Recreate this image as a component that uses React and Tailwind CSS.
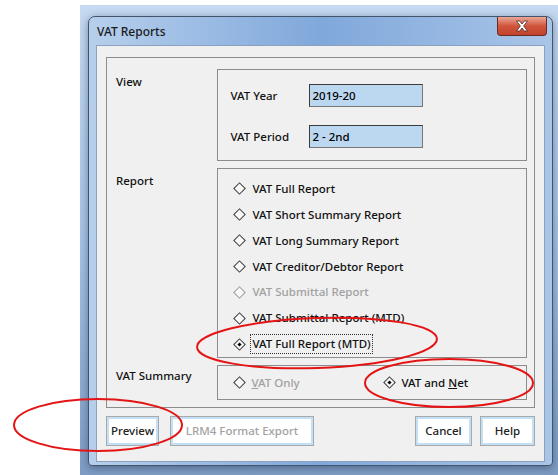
import React from 'react';

const font = { fontFamily: '"Noto Sans", "Open Sans", sans-serif' };

const Diamond = ({ checked, disabled }) => (
  <span className="flex h-[13px] w-[13px] shrink-0 items-center justify-center">
    <span
      className={`flex h-[9px] w-[9px] rotate-45 items-center justify-center border bg-[#f8f8f8] ${
        disabled ? 'border-[#9a9a9a]' : 'border-[#3a3a3a]'
      }`}
    >
      {checked && <span className="h-[3px] w-[3px] bg-black" />}
    </span>
  </span>
);

const reports = [
  { label: 'VAT Full Report' },
  { label: 'VAT Short Summary Report' },
  { label: 'VAT Long Summary Report' },
  { label: 'VAT Creditor/Debtor Report' },
  { label: 'VAT Submittal Report', disabled: true },
  { label: 'VAT Submittal Report (MTD)' },
  { label: 'VAT Full Report (MTD)', checked: true },
];

const Field = ({ label, value }) => (
  <div className="flex items-center">
    <span className="w-[79px] text-[11.5px] font-medium text-[#111]">{label}</span>
    <div className="flex h-[23px] w-[114px] items-center border border-[#3c3c3c] border-r-[#777] border-b-[#777] bg-[#bcd7f0] px-[2px] text-[11.5px] font-medium text-black">
      {value}
    </div>
  </div>
);

const Button = ({ children, disabled, className = '' }) => (
  <button
    className={`flex h-[30px] items-center justify-center border border-[#a9a9a9] bg-white text-[11.5px] font-medium shadow-[inset_0_0_0_2px_#c2e1f7] ${
      disabled ? 'text-[#a2a2a2]' : 'text-[#222]'
    } ${className}`}
  >
    {children}
  </button>
);

const Section = ({ label, labelPad, children }) => (
  <div className="flex">
    <div className={`w-[102px] text-[11.5px] font-medium text-[#111] ${labelPad}`}>{label}</div>
    {children}
  </div>
);

export default function App() {
  return (
    <div className="relative h-[475px] w-[558px] overflow-hidden bg-white" style={font}>
      <div className="flex h-full pl-[80px] pt-[5px]">
        {/* desktop behind the dialog */}
        <div className="flex-1 bg-gradient-to-b from-[#c6daf1] via-[#a9c4e6] to-[#7f9dc4] pl-[8px] pt-[11px]">
          <div className="flex h-[450px] w-[465px] flex-col rounded-t-[7px] rounded-b-[4px] border border-[#44546b] bg-gradient-to-r from-[#b6cfec] via-[#80a8db] to-[#a9c5e8] shadow-[0_2px_8px_rgba(30,50,80,0.5)]">
            {/* title bar */}
            <div className="flex h-[28px] items-start justify-between">
              <span className="pl-[8px] pt-[6px] text-[12px] font-medium text-[#1a1a1a]">VAT Reports</span>
              <div className="mr-[5px] flex h-[19px] w-[50px] items-center justify-center rounded-b-[4px] border border-t-0 border-[#6b2b22] bg-gradient-to-b from-[#e9a797] via-[#d0543c] to-[#c2432b]">
                <svg width="14" height="12" viewBox="0 0 14 12">
                  <path
                    d="M1.5 1h3.2L7 4l2.3-3h3.2L8.6 6l3.9 5H9.3L7 8 4.7 11H1.5l3.9-5z"
                    fill="#fff"
                    stroke="#4b2a25"
                    strokeWidth="0.8"
                    strokeLinejoin="round"
                  />
                </svg>
              </div>
            </div>

            {/* client area */}
            <div className="mx-[7px] mb-[3px] flex flex-1 flex-col border border-[#8ca1bd] bg-[#f0f0f0] px-[9px] pt-[11px]">
              <div className="flex h-[351px] flex-col gap-[7px] border border-[#8c8c8c] py-[11px] pl-[9px] pr-[7px]">
                <Section label="View" labelPad="pt-[4px]">
                  <div className="flex h-[92px] w-[311px] flex-col gap-[18px] border border-[#8c8c8c] pl-[12px] pt-[14px]">
                    <Field label="VAT Year" value="2019-20" />
                    <Field label="VAT Period" value="2 - 2nd" />
                  </div>
                </Section>

                <Section label="Report" labelPad="pt-[4px]">
                  <div className="flex h-[190px] w-[311px] flex-col border border-[#8c8c8c] pl-[15px] pt-[7px]">
                    {reports.map((r) => (
                      <div key={r.label} className="flex h-[26.2px] items-center gap-[4px]">
                        <Diamond checked={r.checked} disabled={r.disabled} />
                        <span
                          className={`px-[1px] text-[11.5px] font-medium leading-[18px] ${
                            r.disabled ? 'text-[#a0a0a0]' : 'text-[#111]'
                          } ${r.checked ? 'border border-dotted border-[#333]' : 'border border-transparent'}`}
                        >
                          {r.label}
                        </span>
                      </div>
                    ))}
                  </div>
                </Section>

                <Section label="VAT Summary" labelPad="pt-[2px]">
                  <div className="flex h-[35px] w-[311px] items-center border border-[#8c8c8c] pl-[15px]">
                    <div className="flex w-[150px] items-center gap-[5px]">
                      <Diamond />
                      <span className="text-[11.5px] font-medium text-[#a0a0a0]">
                        <span className="underline">V</span>AT Only
                      </span>
                    </div>
                    <div className="flex items-center gap-[5px]">
                      <Diamond checked />
                      <span className="text-[11.5px] font-medium text-[#111]">
                        VAT and <span className="underline">N</span>et
                      </span>
                    </div>
                  </div>
                </Section>
              </div>

              <div className="mt-[8px] flex">
                <Button className="w-[53px]">Preview</Button>
                <Button disabled className="ml-[11px] w-[144px]">LRM4 Format Export</Button>
                <Button className="ml-auto w-[57px]">Cancel</Button>
                <Button className="ml-[8px] w-[55px]">Help</Button>
              </div>
            </div>
          </div>
        </div>
      </div>

      {/* red annotation rings */}
      <svg className="pointer-events-none absolute left-0 top-0" width="558" height="475">
        <g fill="none" stroke="#e51414" strokeWidth="2">
          <ellipse cx="317" cy="343" rx="120" ry="25" transform="rotate(-2 317 343)" />
          <ellipse cx="449" cy="383" rx="84" ry="24" />
          <ellipse cx="98" cy="425" rx="84" ry="26" />
        </g>
      </svg>
    </div>
  );
}
